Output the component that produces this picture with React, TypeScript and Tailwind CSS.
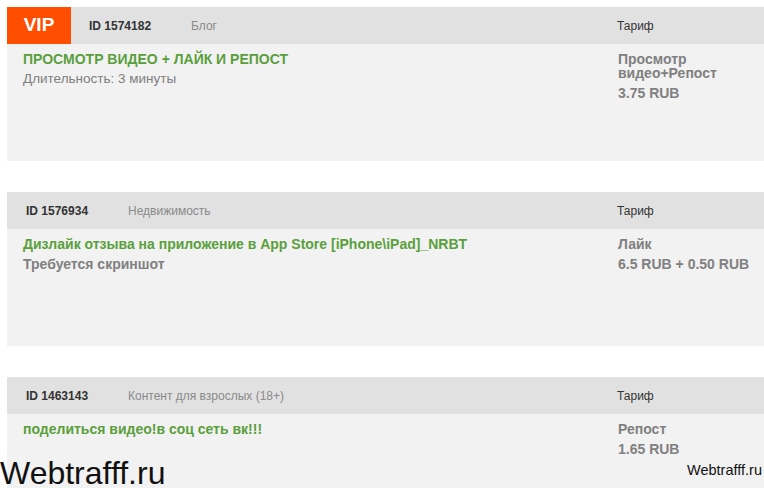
const font = { fontFamily: '"Liberation Sans", Arial, sans-serif' };

type Task = {
  vip?: boolean;
  id: string;
  category: string;
  title: string;
  note?: string;
  noteBold?: boolean;
  tarif: string;
  price: string;
};

const tasks: Task[] = [
  {
    vip: true,
    id: '1574182',
    category: 'Блог',
    title: 'ПРОСМОТР ВИДЕО + ЛАЙК И РЕПОСТ',
    note: 'Длительность: 3 минуты',
    tarif: 'Просмотр видео+Репост',
    price: '3.75 RUB',
  },
  {
    id: '1576934',
    category: 'Недвижимость',
    title: 'Дизлайк отзыва на приложение в App Store [iPhone\\iPad]_NRBT',
    note: 'Требуется скриншот',
    noteBold: true,
    tarif: 'Лайк',
    price: '6.5 RUB + 0.50 RUB',
  },
  {
    id: '1463143',
    category: 'Контент для взрослых (18+)',
    title: 'поделиться видео!в соц сеть вк!!!',
    tarif: 'Репост',
    price: '1.65 RUB',
  },
];

function TaskCard({ t }: { t: Task }) {
  return (
    <div className="ml-[7px]">
      {/* Шапка */}
      <div className="flex h-[37px] items-center bg-[#e1e1e1] text-[12px]">
        {t.vip ? (
          <div className="flex h-full w-[64px] items-center justify-center bg-[#ff4e00] text-[19px] font-bold text-white">
            VIP
          </div>
        ) : null}
        <div className={`flex-1 flex items-center ${t.vip ? 'pl-[18px]' : 'pl-[19px]'}`}>
          <span className="w-[102px] font-bold text-[#333]">ID {t.id}</span>
          <span className="text-[#8a8a8a]">{t.category}</span>
        </div>
        <div className="w-[147px] text-[#333]">Тариф</div>
      </div>
      {/* Тело */}
      <div className="flex h-[117px] bg-[#f2f2f2]">
        <div className="flex-1 pl-[16px] pt-[5px]">
          <div className="text-[14px] font-bold leading-[20px] text-[#5a9f3c]">{t.title}</div>
          {t.note ? (
            <div
              className={`leading-[20px] text-[#808080] ${t.noteBold ? 'text-[14px] font-bold' : 'text-[13.5px]'}`}
            >
              {t.note}
            </div>
          ) : null}
        </div>
        <div className="w-[146px] pt-[8px] pr-[10px] text-[14px] font-bold text-[#808080]">
          <div className="leading-[14px]">{t.tarif}</div>
          <div className="mt-[6px] leading-[14px]">{t.price}</div>
        </div>
      </div>
    </div>
  );
}

export default function App() {
  return (
    <div className="relative h-[488px] w-[764px] overflow-hidden bg-white" style={font}>
      <div className="flex flex-col gap-[31px] pt-[7px]">
        {tasks.map((t) => (
          <TaskCard key={t.id} t={t} />
        ))}
      </div>
      {/* Водяные знаки */}
      <div className="absolute bottom-0 left-0 text-[32px] leading-[30px] text-[#111]">Webtrafff.ru</div>
      <div className="absolute bottom-[6px] right-[2px] text-[14.5px] text-[#111]">Webtrafff.ru</div>
    </div>
  );
}
